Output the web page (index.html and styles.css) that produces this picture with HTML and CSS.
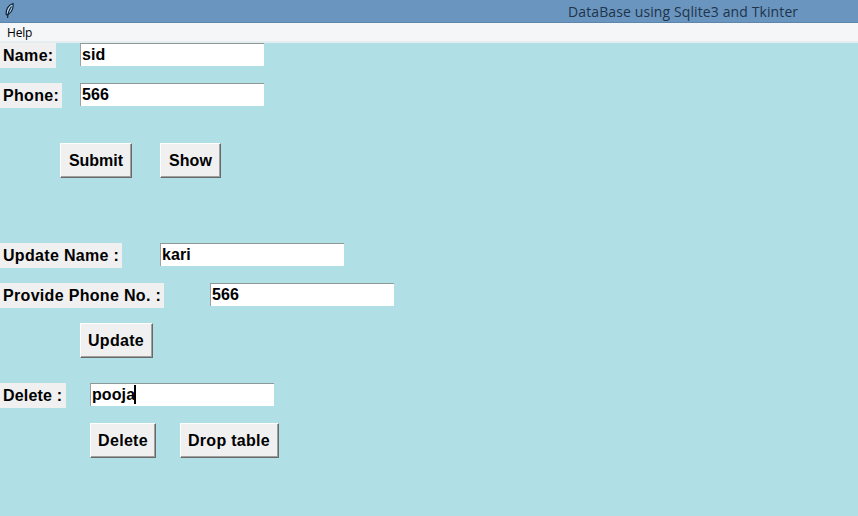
FILE: index.html
```html
<!DOCTYPE html>
<html lang="en">
<head>
<meta charset="utf-8">
<title>DataBase using Sqlite3 and Tkinter</title>
<link rel="stylesheet" href="styles.css">
</head>
<body>
<header class="titlebar">
  <svg class="feather" width="12" height="17" viewBox="0 0 12 17">
    <path d="M2.200 12.500C1.600 8 4 3 9 1.500c.8 3.500-.8 8-4 10.300L3 13Z" fill="#a9cfec" stroke="#152638" stroke-width="1.200"/>
    <path d="M7.500 4.500C5 8 3.800 11 3.600 16" fill="none" stroke="#10202f" stroke-width="1.100"/>
  </svg>
  <h1 class="title">DataBase using Sqlite3 and Tkinter</h1>
</header>
<nav class="menubar"><span class="menu">Help</span></nav>
<main class="form">
  <div class="row">
    <label class="label name">Name:</label>
    <div class="entry">sid</div>
  </div>
  <div class="row tall">
    <label class="label phone">Phone:</label>
    <div class="entry">566</div>
  </div>
  <div class="row actions">
    <button class="button submit">Submit</button>
    <button class="button show">Show</button>
  </div>
  <div class="row">
    <label class="label update-name">Update Name :</label>
    <div class="entry">kari</div>
  </div>
  <div class="row">
    <label class="label provide-phone">Provide Phone No. :</label>
    <div class="entry">566</div>
  </div>
  <div class="row tall">
    <button class="button update">Update</button>
  </div>
  <div class="row">
    <label class="label delete-name">Delete :</label>
    <div class="entry">pooja<span class="caret"></span></div>
  </div>
  <div class="row">
    <button class="button delete">Delete</button>
    <button class="button drop">Drop table</button>
  </div>
</main>
</body>
</html>
```
FILE: styles.css
```css
* { box-sizing: border-box; }
body {
  margin: 0;
  height: 516px;
  overflow: hidden;
  background: #b0e0e6;
  color: #000;
  font-family: "Liberation Sans", Arial, sans-serif;
}
.titlebar {
  display: flex;
  justify-content: space-between;
  height: 23px;
  padding: 2px 60px 0 4px;
  background: #6a95bf;
  border-bottom: 1px solid #5e85ac;
}
.title {
  margin: 0;
  width: 230px;
  font: 400 14px/20px "Open Sans", sans-serif;
  letter-spacing: 0.11px;
  white-space: nowrap;
  color: #20344a;
}
.menubar {
  height: 20px;
  padding-left: 7px;
  background: #f5f6f7;
  border-bottom: 2px solid #e4eef0;
}
.menu {
  display: block;
  font: 12px/20px "Open Sans", sans-serif;
  letter-spacing: -0.2px;
}
.row {
  display: flex;
  align-items: flex-start;
  height: 40px;
  font-size: 16px;
  font-weight: bold;
}
.row.tall { height: 60px; }
.row.actions { height: 100px; }
.label {
  height: 25px;
  padding-left: 3px;
  line-height: 25px;
  letter-spacing: 0.32px;
  background: #f0f0f0;
  white-space: nowrap;
}
.name { width: 56px; margin-right: 24px; }
.phone { width: 62px; margin-right: 18px; }
.update-name { width: 122px; margin-right: 38px; }
.provide-phone { width: 164px; margin-right: 46px; }
.delete-name { width: 66px; margin-right: 24px; letter-spacing: 0.2px; }
.entry {
  display: flex;
  width: 184px;
  height: 23px;
  padding-left: 1px;
  line-height: 21px;
  letter-spacing: 0.1px;
  background: #fff;
  border-top: 1px solid #8e9899;
  border-left: 1px solid #a0a0a0;
}
.caret {
  width: 2px;
  height: 19px;
  margin: 1px 0 0 -1px;
  background: #000;
}
.button {
  height: 35px;
  padding: 0;
  background: #f0f0f0;
  border: 1px solid;
  border-color: #fff #696969 #696969 #fff;
  box-shadow: inset -1px -1px #a0a0a0;
  color: #000;
  font: inherit;
  line-height: 33px;
  letter-spacing: 0.3px;
  white-space: nowrap;
}
.submit { width: 72px; margin-left: 60px; letter-spacing: 0; }
.show { width: 61px; margin-left: 28px; letter-spacing: 0.1px; }
.update { width: 73px; margin-left: 80px; padding-right: 1px; }
.delete { width: 66px; margin-left: 90px; }
.drop { width: 99px; margin-left: 24px; padding-right: 1px; }
```
